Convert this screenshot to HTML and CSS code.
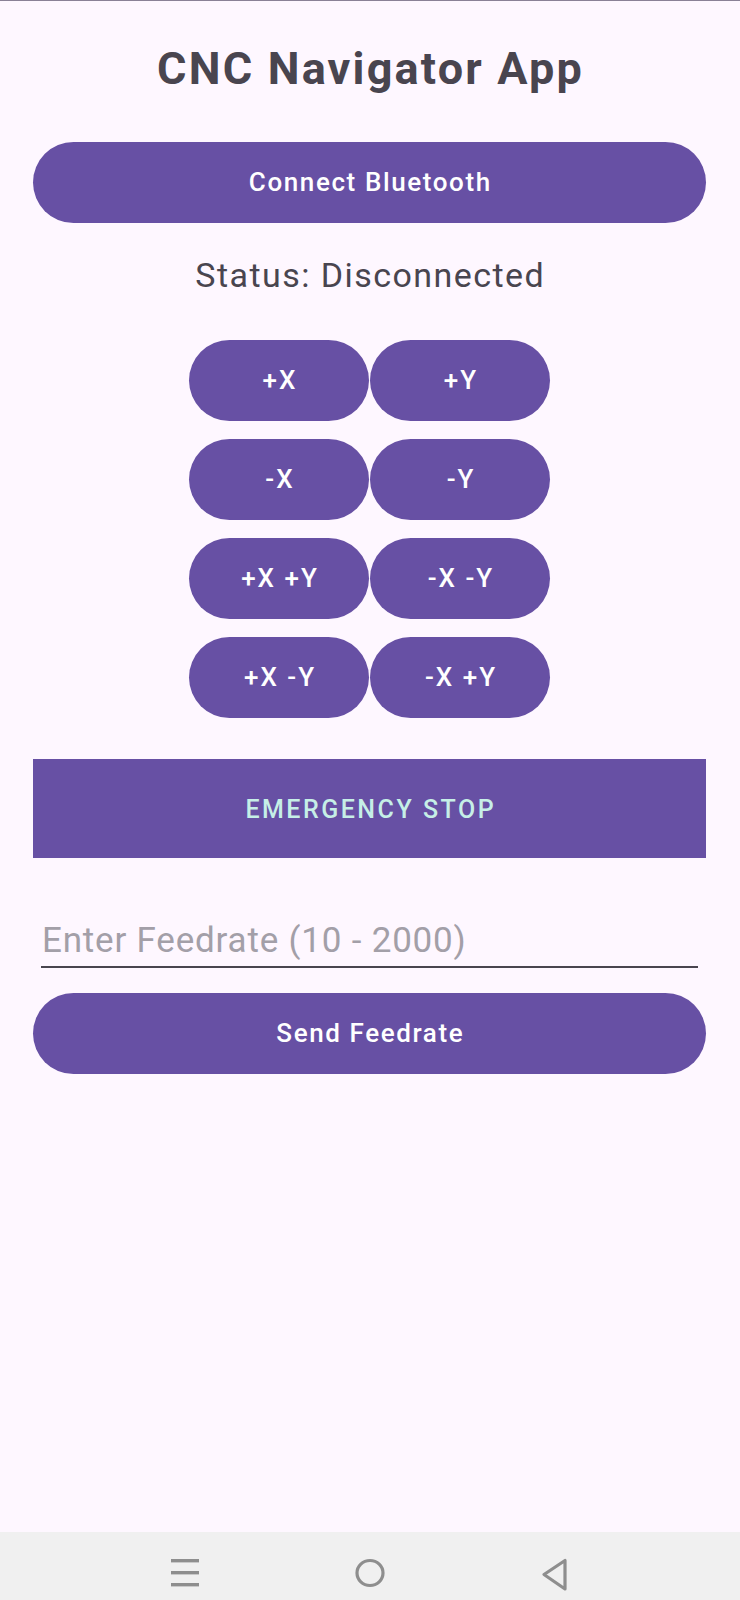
FILE: index.html
```html
<!DOCTYPE html>
<html lang="en">
<head>
<meta charset="utf-8">
<title>CNC Navigator App</title>
<link rel="stylesheet" href="styles.css">
</head>
<body>
<div class="screen">
  <div class="top-line"></div>
  <main class="content">
    <h1 class="title">CNC Navigator App</h1>
    <button class="pill-btn connect">Connect Bluetooth</button>
    <p class="status">Status: Disconnected</p>
    <div class="jog-grid">
      <button class="pill-btn jog">+X</button>
      <button class="pill-btn jog">+Y</button>
      <button class="pill-btn jog">-X</button>
      <button class="pill-btn jog">-Y</button>
      <button class="pill-btn jog">+X +Y</button>
      <button class="pill-btn jog">-X -Y</button>
      <button class="pill-btn jog">+X -Y</button>
      <button class="pill-btn jog">-X +Y</button>
    </div>
    <button class="estop">EMERGENCY STOP</button>
    <input class="feed-input" type="text" placeholder="Enter Feedrate (10 - 2000)">
    <button class="pill-btn send">Send Feedrate</button>
  </main>
  <nav class="navbar">
    <div class="nav-cell">
      <svg width="30" height="30" viewBox="0 0 30 30">
        <rect x="1" y="1" width="28" height="3.4" fill="#8e8e8e"/>
        <rect x="1" y="13" width="28" height="3.4" fill="#8e8e8e"/>
        <rect x="1" y="25" width="28" height="3.4" fill="#8e8e8e"/>
      </svg>
    </div>
    <div class="nav-cell">
      <svg width="30" height="30" viewBox="0 0 30 30">
        <ellipse cx="15" cy="15" rx="13" ry="12.5" fill="none" stroke="#8e8e8e" stroke-width="3.2"/>
      </svg>
    </div>
    <div class="nav-cell">
      <svg width="30" height="34" viewBox="0 0 30 34">
        <path d="M25 2.5 L25 31 L4 16.5 Z" fill="none" stroke="#8e8e8e" stroke-width="3.2" stroke-linejoin="round"/>
      </svg>
    </div>
  </nav>
</div>
</body>
</html>
```

FILE: styles.css
```css
* {
  box-sizing: border-box;
}

html, body {
  margin: 0;
  padding: 0;
}

body {
  background: #FEF7FF;
  font-family: Roboto, "Noto Sans", "Liberation Sans", sans-serif;
}

.screen {
  min-height: 1600px;
  display: flex;
  flex-direction: column;
}

.top-line {
  height: 1px;
  background: #8a8196;
}

.content {
  display: flex;
  flex-direction: column;
  padding: 0 34px 0 33px;
}

.title {
  margin: 41px 0 0;
  font-size: 45px;
  line-height: 54px;
  font-weight: 700;
  color: #49454F;
  text-align: center;
  letter-spacing: 2.2px;
  text-indent: 2.2px;
}

.pill-btn {
  border: none;
  background: #6750A4;
  color: #FFFFFF;
  font-family: Roboto, "Noto Sans", "Liberation Sans", sans-serif;
  font-size: 26px;
  font-weight: 500;
  letter-spacing: 1.6px;
  text-indent: 1.6px;
  height: 81px;
  border-radius: 41px;
  padding: 0 0 1px;
  text-align: center;
}

.connect {
  margin-top: 46px;
  width: 100%;
}

.status {
  margin: 32px 0 0;
  font-size: 34px;
  line-height: 40px;
  color: #49454F;
  text-align: center;
  letter-spacing: 1.45px;
  text-indent: 1.45px;
}

.jog-grid {
  margin: 45px auto 0;
  display: grid;
  grid-template-columns: 180px 180px;
  column-gap: 1px;
  row-gap: 18px;
}

.jog {
  width: 180px;
  letter-spacing: 2px;
  text-indent: 2px;
}

.estop {
  margin-top: 41px;
  height: 99px;
  width: 100%;
  border: none;
  border-radius: 0;
  background: #6750A4;
  color: #C6EFE7;
  font-family: Roboto, "Noto Sans", "Liberation Sans", sans-serif;
  font-size: 25px;
  font-weight: 500;
  letter-spacing: 2.5px;
  text-indent: 2.5px;
  padding: 2px 0 0;
}

.feed-input {
  margin: 59px 8px 0;
  height: 51px;
  padding: 0 0 3px 1px;
  border: none;
  border-bottom: 2px solid #49454F;
  background: transparent;
  font-family: Roboto, "Noto Sans", "Liberation Sans", sans-serif;
  font-size: 35px;
  line-height: 46px;
  letter-spacing: 0.8px;
  color: #1D1B20;
  outline: none;
}

.feed-input::placeholder {
  color: #A39FA8;
}

.send {
  margin-top: 25px;
  width: 100%;
}

.navbar {
  margin-top: auto;
  height: 68px;
  background: #F0F0F0;
  display: flex;
  justify-content: center;
  align-items: flex-start;
  padding-top: 26px;
}

.nav-cell {
  width: 185px;
  display: flex;
  justify-content: center;
}
```
